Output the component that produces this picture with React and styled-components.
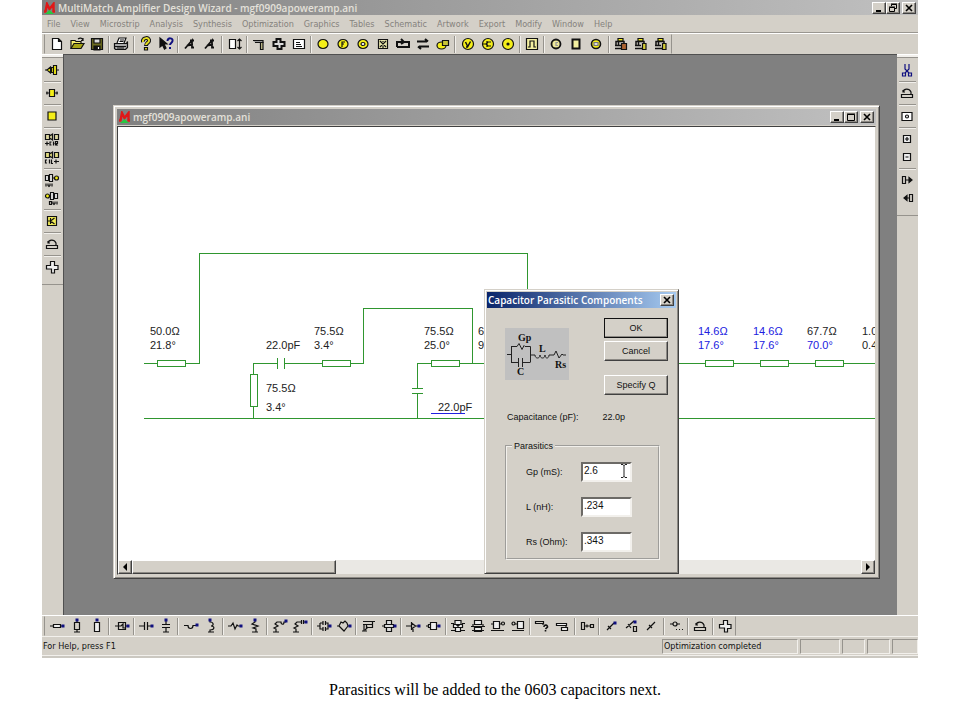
import { useState } from 'react';
import styled, { createGlobalStyle, css } from 'styled-components';

const face = '#d4d0c8';
const green = '#2f962f';
const blue = '#2020e0';
const navy = '#101080';
const yellow = '#f4ee18';

const uiFont = '"DejaVu Sans Condensed", "DejaVu Sans", sans-serif';
const titleFont = '"Open Sans", "Noto Sans", sans-serif';
const dialogFont = '"Liberation Sans", Arial, sans-serif';

const GlobalStyle = createGlobalStyle`
    * {
        box-sizing: border-box;
    }
    body {
        margin: 0;
        background: #fff;
    }
    button {
        padding: 0;
        border: 0;
        background: none;
        color: inherit;
        font: inherit;
    }
`;

const raised = css`
    border: 1px solid;
    border-color: #fff #404040 #404040 #fff;
    box-shadow: inset -1px -1px 0 #8c8984;
    background: ${face};
`;

const Page = styled.div`
    display: flex;
    flex-direction: column;
    min-height: 100vh;
    padding: 0 42px;
`;

const Frame = styled.main`
    display: flex;
    flex: 1;
    flex-direction: column;
    background: ${face};
    color: #111;
    font: 9px/12px ${uiFont};
`;

const Caption = styled.p`
    margin: 0;
    padding: 23px 0 21px 30px;
    color: #000;
    font: 16px/18px 'Liberation Serif', 'Times New Roman', serif;
    text-align: center;
`;

const TitleBar = styled.header`
    display: flex;
    align-items: center;
    gap: 2px;
    height: ${(p) => (p.$inner ? 16 : 15)}px;
    padding: 0 2px 0 1px;
    background: linear-gradient(90deg, #808080, #c0c0c0);
    color: #e4e1da;
`;

const Title = styled.h1`
    flex: 1;
    margin: 0;
    overflow: hidden;
    font: 600 10px/14px ${titleFont};
    white-space: nowrap;
`;

const WindowButtons = styled.div`
    display: flex;
    & > :last-child {
        margin-left: 2px;
    }
`;

const CaptionButton = styled.button`
    ${raised}
    display: grid;
    place-items: center;
    width: 14px;
    height: 12px;
    color: #000;
`;

const MenuBar = styled.nav`
    display: flex;
    height: 18px;
    align-items: center;
    border-bottom: 1px solid #999690;
    color: #85827d;
`;

const MenuItem = styled.button`
    padding: 0 5px;
`;

const ToolBar = styled.div`
    display: flex;
    flex-shrink: 0;
    height: 21px;
    padding-left: 2px;
    border-top: 1px solid #fff;
`;

const Tools = styled.div`
    display: flex;
    flex: 0 1 ${(p) => p.$length}px;
    align-items: center;
    justify-content: space-between;
    border: 1px solid;
    border-color: transparent #96938d transparent #96938d;
    padding-left: 2px;
`;

const Group = styled.div`
    display: flex;
    flex-direction: ${(p) => (p.$vertical ? 'column' : 'row')};
`;

const Separator = styled.span`
    ${(p) =>
        p.$vertical
            ? 'height: 2px; margin: 2px 2px 1px; border-top: 1px solid #96938d; border-bottom: 1px solid #f2f0ec;'
            : 'width: 2px; height: 17px; border-left: 1px solid #96938d; border-right: 1px solid #f2f0ec;'}
`;

const Tool = styled.button`
    display: grid;
    place-items: center;
    width: 20px;
    height: 18px;
`;

const Glyph = styled.svg`
    display: block;
    width: 16px;
    height: 16px;
    fill: none;
    stroke: #111;
    stroke-width: 1.2;
    overflow: visible;
`;

const Middle = styled.div`
    display: flex;
    flex: 1;
`;

const SideBar = styled.div`
    width: 21px;
    border-top: 1px solid #fff;
`;

const SideTools = styled.div`
    display: flex;
    flex-direction: column;
    padding: 4px 0 8px;
    border-top: 2px solid #f2f0ec;
    border-bottom: 1px solid #96938d;
    box-shadow: inset 0 1px 0 #96938d;
`;

const Desktop = styled.div`
    position: relative;
    flex: 1;
    overflow: hidden;
    border: solid #505050;
    border-width: 1px 0 0 1px;
    background: #808080;
`;

const DocumentWindow = styled.section`
    position: absolute;
    inset: 50px 17px 36px 49px;
    display: flex;
    flex-direction: column;
    padding: 3px;
    border: 1px solid;
    border-color: ${face} #404040 #404040 ${face};
    background: ${face};
    box-shadow: inset 1px 1px 0 #fff, inset -1px -1px 0 #8c8984;
`;

const DocumentView = styled.div`
    display: flex;
    flex: 1;
    flex-direction: column;
    min-height: 0;
    margin-top: 1px;
    border: 1px solid;
    border-color: #404040 ${face} ${face} #404040;
    background: #fff;
`;

const Schematic = styled.svg`
    flex: 1;
    width: 100%;
    min-height: 0;
    fill: none;
    stroke: ${green};
    shape-rendering: crispEdges;
    text {
        stroke: none;
        font: 11px ${dialogFont};
    }
`;

const ScrollBar = styled.div`
    display: flex;
    height: 14px;
    background: #eae8e4;
`;

const ScrollButton = styled.button`
    ${raised}
    display: grid;
    place-items: center;
    width: 14px;
`;

const Thumb = styled.div`
    ${raised}
    width: 27%;
    margin-right: auto;
`;

const Dialog = styled.section`
    position: absolute;
    left: 420px;
    top: 234px;
    width: 195px;
    padding: 2px;
    border: 1px solid;
    border-color: ${face} #404040 #404040 ${face};
    background: ${face};
    box-shadow: inset 1px 1px 0 #fff, inset -1px -1px 0 #8c8984;
    color: #111;
    font: 9px/12px ${dialogFont};
`;

const DialogTitle = styled.header`
    display: flex;
    align-items: center;
    height: 16px;
    padding: 0 2px 0 1px;
    background: linear-gradient(90deg, #0a246a, #a6caf0);
    color: #fff;
`;

const DialogHeading = styled.h2`
    flex: 1;
    margin: 0;
    font: 600 10px/14px ${titleFont};
    white-space: nowrap;
`;

const DialogTop = styled.div`
    display: flex;
    align-items: flex-start;
    justify-content: space-between;
    padding: 10px 8px 0 18px;
`;

const Diagram = styled.svg`
    width: 64px;
    height: 52px;
    margin-top: 10px;
    background: #c0c0c0;
    fill: none;
    stroke: #222;
    text {
        fill: #111;
        stroke: none;
        font: bold 10px 'Liberation Serif', serif;
    }
`;

const DialogButtons = styled.div`
    display: flex;
    flex-direction: column;
    gap: 3px;
    & > :last-child {
        margin-top: 11px;
    }
`;

const PushButton = styled.button`
    ${raised}
    width: 64px;
    height: 20px;
    ${(p) => p.$primary && 'outline: 1px solid #111; border-color: #fff #8c8984 #8c8984 #fff; outline-offset: -1px;'}
`;

const Capacitance = styled.p`
    display: flex;
    gap: 24px;
    margin: 16px 0 0 20px;
`;

const Parasitics = styled.fieldset`
    margin: 17px 16px 11px 18px;
    padding: 10px 26px 6px 19px;
    border: 2px groove #f2f0ec;
`;

const Legend = styled.legend`
    margin-left: -14px;
    padding: 0 2px;
`;

const Field = styled.div`
    display: flex;
    align-items: center;
    justify-content: space-between;
    & + & {
        margin-top: 15px;
    }
`;

const TextBox = styled.input`
    width: 51px;
    height: 20px;
    padding: 0 1px 3px;
    border: 2px solid;
    border-color: #6c6a66 #f2f0ec #f2f0ec #6c6a66;
    border-radius: 0;
    outline: 0;
    background: #fff;
    color: #111;
    font: 10px/12px ${dialogFont};
`;

const TextCursor = styled.svg`
    position: absolute;
    left: 135px;
    top: 174px;
    width: 8px;
    height: 14px;
    fill: none;
    stroke: #222;
`;

const StatusBar = styled.footer`
    display: flex;
    align-items: center;
    gap: 2px;
    height: 19px;
    border-top: 1px solid #f2f0ec;
`;

const StatusText = styled.span`
    flex: 1;
    padding-left: 1px;
`;

const StatusCell = styled.span`
    width: ${(p) => p.$w}px;
    height: 15px;
    padding-left: 1px;
    border: 1px solid;
    border-color: #96938d #f2f0ec #f2f0ec #96938d;
    white-space: nowrap;
`;

const FrameEdge = styled.div`
    height: 3px;
    border-top: 1px solid #f2f0ec;
    background: #cbc8c1;
`;

const dot = (x, y) => <rect x={x} y={y} width="2" height="2" fill={navy} stroke={navy} strokeWidth="1" />;

const glyphs = {
    page: <path d="M3.5 2.5h6l3 3v8h-9zM9.5 2.5v3h3" fill="#fff" />,
    open: (
        <>
            <path d="M2 12.5v-8h4l1 1h5v2" fill="#f5ef70" />
            <path d="M2 12.5l3-5h10l-3 5z" fill="#a6a418" />
            <path d="M9 3c2-1.5 4-1 5 1M14 2v2.5h-2" />
        </>
    ),
    save: (
        <>
            <path d="M2.5 2.5h11v11h-11z" fill="#6d6c20" />
            <path d="M5 3h6v4H5z" fill="#ddd" />
            <path d="M5 10h6v4H5z" fill="#111" />
            <path d="M9.5 11v2" stroke="#fff" />
        </>
    ),
    print: (
        <>
            <path d="M4 7l2-5h7l-2 5" fill="#fff" />
            <path d="M7 4h4M6.5 5.5h4" />
            <path d="M1.5 7.5h12l1-2v6l-2 2h-10l-1-1z" fill="#aaa" />
            <path d="M2 10.5h11M4 12h7" />
        </>
    ),
    help: (
        <>
            <path d="M5 6c-1-5 7-5 6-1-.5 2-3 2-3 5" strokeWidth="4" />
            <path d="M6.5 11.5h3v2.5h-3z" fill="#e4dc20" />
            <path d="M5 6c-1-5 7-5 6-1-.5 2-3 2-3 4" stroke="#e4dc20" strokeWidth="2" />
        </>
    ),
    what: (
        <>
            <path d="M2 2v9l2.5-2 2 4 1.5-1-2-4h3z" fill="#111" />
            <path d="M9.5 5c0-4 6-3 5 0-.5 2-2.5 2-2.5 4M12 11v2" stroke={navy} strokeWidth="2" />
        </>
    ),
    letterA: <path d="M3 12.5l7-8v7h2M5 9.5l6-1M8 4.5h4" strokeWidth="1.8" />,
    sizeBox: (
        <>
            <path d="M2.5 3.5h6v9h-6z" fill="#fff" />
            <path d="M12.5 3v10M10.5 5l2-2 2 2M10.5 11l2 2 2-2" />
        </>
    ),
    tee: (
        <>
            <path d="M2 4.5h10v2H4" fill="#999" />
            <path d="M9.5 6.5h2.5v7H9.5z" fill="#c9c490" />
        </>
    ),
    plus: <path d="M5.5 3h4v3h4v4h-3v3h-4v-3h-4V6h3z" fill="#ddd" strokeWidth="2" />,
    note: <path d="M2.5 3.5h11v9h-11zM5 6.5h4M5 8.5h5M5 10.5h6" fill="#fff" />,
    ellipse: <ellipse cx="8" cy="8" rx="5" ry="4.5" fill={yellow} />,
    ellipseF: (
        <>
            <ellipse cx="8" cy="8" rx="5" ry="4.5" fill={yellow} />
            <path d="M7 11V6h3M7 8h2" />
        </>
    ),
    ring: (
        <>
            <ellipse cx="8" cy="8" rx="5" ry="4.5" fill={yellow} />
            <ellipse cx="8" cy="8" rx="2" ry="1.5" fill="#fff" />
        </>
    ),
    grid: <path d="M3.5 3.5h9v9h-9zM5 5l6 6M11 5l-6 6M8 5v1M8 10v2" fill="#e7e5aa" />,
    loop: <path d="M2 11V6h12v5H2M6 3l3 3-3 2" strokeWidth="2" />,
    swap: <path d="M2 5.5h10M4 10.5h10M10 3l3 2.5M6 13l-3-2.5" strokeWidth="2" />,
    stack: (
        <>
            <ellipse cx="6.5" cy="9.5" rx="4.5" ry="3.5" fill={yellow} />
            <path d="M7.5 4.5h6v5h-6z" fill="#c8c438" />
        </>
    ),
    roundY: (
        <>
            <circle cx="8" cy="8" r="5.5" fill={yellow} />
            <path d="M5.5 6l2 4M10.5 5.5L7.5 11H6" strokeWidth="1.5" />
        </>
    ),
    roundC: (
        <>
            <circle cx="8" cy="8" r="5.5" fill={yellow} />
            <path d="M3 8h3l2-2h3M6 8l2 2h3M7 5v6" />
        </>
    ),
    roundDot: (
        <>
            <circle cx="8" cy="8" r="5.5" fill={yellow} />
            <circle cx="8" cy="8" r="1" fill="#111" />
        </>
    ),
    pulse: (
        <>
            <path d="M2.5 2.5h11v11h-11z" fill="#f3efa0" />
            <path d="M4 11h2V5h4v6h2" />
        </>
    ),
    boldRound: (
        <>
            <circle cx="8" cy="8" r="4.5" fill="#eee89a" strokeWidth="1.8" />
            <path d="M10 6.5H8v3h2" stroke="#999" />
        </>
    ),
    boldSquare: <path d="M4.5 3.5h7v9h-7z" fill="#f2efa0" strokeWidth="2" />,
    boldRing: (
        <>
            <circle cx="8" cy="8" r="4.5" fill={yellow} strokeWidth="1.6" />
            <path d="M6 6.5h4v3H6z" fill="#ddd" stroke="#777" />
        </>
    ),
    lockA: (
        <>
            <path d="M5 2.5h5V5H5z" fill={yellow} />
            <path d="M3 9V5.5h8V8M2 9.5h6M2 12.5h6M5.5 6v4" strokeWidth="1.5" />
            <path d="M8.5 7.5h5v6h-5z" fill="#ac6330" />
        </>
    ),
    lockB: (
        <>
            <path d="M5 2.5h5V5H5z" fill={yellow} />
            <path d="M3 9V5.5h8V8M2 9.5h6M2 12.5h7M5.5 6v4" strokeWidth="1.5" />
            <path d="M9.5 7.5h3.5v6H9.5z" fill="#d4cc38" />
        </>
    ),
    ampLeft: (
        <>
            <path d="M1 8h2M13 8h2" />
            <path d="M3 8l3.5-3v6zM7.5 5.5h2v5h-2zM9.5 3.5h3v9h-3z" fill={yellow} />
        </>
    ),
    block: (
        <>
            <path d="M5.5 4.5h5v7h-5z" fill={yellow} />
            <path d="M2 8h3M11 8h3M3 6.5v3M13 6.5v3" />
        </>
    ),
    square: <path d="M4 4h8v8H4z" fill={yellow} />,
    cir: (
        <>
            <path d="M1.5 3.5h4v5h-4zM5.5 5l3-2v6l-3-2zM10.5 3.5h4v5h-4z" fill="#ddd8a0" />
            <path d="M1 12.5h4M3 10.5v4M7.5 11H6v3h1.5M9.5 10.5v4M11.5 14.5v-4h2v2h-2l2 2" />
        </>
    ),
    cil: (
        <>
            <path d="M1.5 3.5h4v5h-4zM5.5 5l3-2v6l-3-2zM10.5 3.5h4v5h-4z" fill="#e2dc80" />
            <path d="M3 11H1.5v3H3M5.5 10.5v4M7.5 10.5v4H9M10 12.5h5M12 10.5v4" />
        </>
    ),
    ivi: (
        <>
            <path d="M1.5 3.5h3v5h-3zM5.5 2.5h3v7h-3zM8.5 6h2" fill="#eee" />
            <circle cx="12.5" cy="6" r="2" fill={yellow} />
            <path d="M2 11.5v3M4 11.5v2l1 1 1-1v-2M8 11.5v3" />
        </>
    ),
    ovi: (
        <>
            <circle cx="3.5" cy="6" r="2" fill={yellow} />
            <path d="M6.5 2.5h3v7h-3zM10.5 3.5h3v5h-3z" fill="#eee" />
            <path d="M5.5 11.5h2v3h-2zM9 11.5v2l1 1 1-1v-2M13 11.5v3" />
        </>
    ),
    transistor: (
        <>
            <path d="M3.5 3.5h9v9h-9z" fill="#f3ed58" />
            <path d="M3.5 8h3M6.5 5v6M6.5 8l4-3M6.5 8l4 3" />
        </>
    ),
    hat: <path d="M2.5 9.5h11v3h-11zM4 7c1-3.5 6-4 8 0v2M4 5v2h2" />,
    cross: <path d="M6.5 2.5h4v4h3.5v4h-3.5v3.5h-3v-4h-5V6.5h4z" fill="#eee" />,
    cut: <path d="M6 2v5l4 4M10 2v5l-4 4M3.5 11h3v3h-3zM9.5 11h3v3h-3z" stroke={navy} />,
    target: (
        <>
            <path d="M3 4.5h10v8H3z" fill="#fff" />
            <circle cx="8" cy="8.5" r="1.5" />
        </>
    ),
    zoomIn: <path d="M4.5 4.5h7v7h-7zM6 8h4M8 6v4" fill="#eee" />,
    zoomOut: <path d="M4.5 4.5h7v7h-7zM6.5 8h3" fill="#eee" />,
    portOut: (
        <>
            <path d="M3.5 4.5h3v7h-3zM7 8h4" />
            <path d="M10 5.5l3 2.5-3 2.5z" fill="#111" />
        </>
    ),
    portIn: (
        <>
            <path d="M10.5 4.5h3v7h-3zM10 8H6" />
            <path d="M8 5.5L5 8l3 2.5z" fill="#111" />
        </>
    ),
    lineH: <><path d="M1 8h3M12 8h2M4.5 6.5h7v3h-7z" fill="#eee" />{dot(13, 7)}</>,
    lineV: <><path d="M8 2v2M8 12v2M5.5 4.5h5v7h-5zM5 14h6" />{dot(7, 1)}</>,
    stub: <><path d="M5.5 4.5h5v9h-5z" fill="#eee" />{dot(7, 1)}</>,
    boxed: <><path d="M1 8h3M12 8h2M4.5 4.5h7v7h-7zM5 8h2l2-2v4h2" />{dot(13, 7)}</>,
    capH: <><path d="M1 8h5M6.5 4v8M9.5 4v8M10 8h4" />{dot(13, 7)}</>,
    capV: <><path d="M8 2v4M4 6.5h8M4 9.5h8M8 10v4M5 14h6" />{dot(7, 1)}</>,
    coilH: <><path d="M1 7.5h4c0 4 5 4 5 0h3" />{dot(13, 6)}</>,
    coilV: <><path d="M7 2v2c4 0 4 4 1 4 4 0 4 4-1 4v2M5 14h6" />{dot(6, 1)}</>,
    resH: <><path d="M1 8h3l2-3 2 6 2-4 1 1h3" />{dot(13, 7)}</>,
    resV: <><path d="M8 2v2l-3 2 6 2-5 2 3 1v3M5 14h6" />{dot(7, 1)}</>,
    chainA: <><path d="M4 14v-3l-2-1 4-2-3-2 2-2h4c0 3 3 3 3 0h2M1 14h6" />{dot(13, 2)}</>,
    chainB: <><path d="M4 14v-3l-2-1 4-2-3-2 2-2h4M9.5 2v4M11.5 2v4M12 4h2M1 14h6" />{dot(13, 3)}</>,
    tankA: <><path d="M1 8h3M4 5v6h3M4 5h3M7 3v4M9.5 3v4M9 5h3v6H9M7 9v4M9.5 9v4M12 8h2" />{dot(13, 7)}</>,
    tankB: <><path d="M1 8h2l2-4 2 1 2-2 2 2 1 3-4 5-5-5M12 8h2" />{dot(13, 7)}</>,
    coupA: <path d="M2 3.5h12M2 6.5h3M5.5 6.5h6v3h-6zM11.5 9.5V4M3 7v6M1 13h5M4 12l3-3" />,
    coupB: <><path d="M1 8h3M12 8h2M5.5 2.5h5v4h-5zM5.5 9.5h5v4h-5zM3.5 6.5h9v3h-9z" fill="#ddd" />{dot(13, 7)}</>,
    fet: <><path d="M1 8h5M6.5 4v8M6.5 5l4 3M6.5 11l4-3h3M8 11v3" />{dot(13, 7)}</>,
    twoPort: <><path d="M1 8h3M12 8h2M5.5 4.5h6v7h-6zM3.5 6.5h2v3h-2z" fill="#eee" />{dot(13, 7)}</>,
    netA: <path d="M1 5.5h3M12 5.5h3M1 12.5h4M11 12.5h4M5 2.5h6v4H5zM3.5 6.5h9v3h-9zM5.5 9.5h5v4h-5zM6 6.5l4 3M10 6.5l-4 3" fill="#eee" />,
    netB: <path d="M1 8.5h14M2 12.5h12M4.5 2.5h7v4h-7zM4.5 9.5h7v4h-7zM3 6v3M13 6v3" fill="#eee" />,
    netC: <><path d="M3.5 3.5h6v7h-6zM10 6h1M1 12.5h13M1 6h2" fill="#eee" /><circle cx="13" cy="5.5" r="1.5" /></>,
    netD: <><path d="M7.5 3.5h6v7h-6zM5 6h2M2 12.5h12" fill="#eee" /><circle cx="3.5" cy="5.5" r="1.5" /></>,
    askTee: (
        <>
            <path d="M1.5 3.5h8v2h-8zM9 5v2" />
            <path d="M10 9c0-3 4-2 3.5 0l-2 2M11.5 12v1.5" strokeWidth="1.6" />
        </>
    ),
    steps: <path d="M2.5 5.5h10v2h-10zM7.5 9.5h6v3h-6zM12 7v2" fill="#eee" />,
    between: <path d="M2.5 4.5h3v7h-3zM6 8h5M8 6.5v3M11.5 6.5h3v3h-3z" />,
    needleA: <><path d="M4 12l7-7M5 8l3 3" />{dot(11, 4)}</>,
    needleB: <><path d="M3 10l8-7M5 6l3 4M10.5 8.5h3v5h-3z" />{dot(11, 3)}</>,
    needleC: <path d="M4 12l8-8M6 7l3 3" />,
    more: <><circle cx="7" cy="6" r="2" /><path d="M2 6h3M9 6h3M8 11.5h1M11 11.5h1M14 11.5h1" /></>,
};

const topTools = [
    ['page', 'open', 'save'],
    ['print'],
    ['help', 'what'],
    ['letterA', 'letterA'],
    ['sizeBox'],
    ['tee', 'plus', 'note'],
    ['ellipse', 'ellipseF', 'ring', 'grid', 'loop', 'swap', 'stack'],
    ['roundY', 'roundC', 'roundDot'],
    ['pulse'],
    ['boldRound', 'boldSquare', 'boldRing'],
    ['lockA', 'lockB', 'lockB'],
];

const bottomTools = [
    ['lineH', 'lineV', 'stub'],
    ['boxed'],
    ['capH', 'capV'],
    ['coilH', 'coilV'],
    ['resH', 'resV'],
    ['chainA', 'chainB'],
    ['tankA', 'tankB'],
    ['coupA', 'coupB'],
    ['fet', 'twoPort'],
    ['netA', 'netB', 'netC', 'netD'],
    ['askTee', 'steps'],
    ['between'],
    ['needleA', 'needleB', 'needleC'],
    ['more'],
    ['hat'],
    ['cross'],
];

const leftTools = [['ampLeft'], ['block'], ['square'], ['cir', 'cil'], ['ivi', 'ovi'], ['transistor'], ['hat'], ['cross']];
const rightTools = [['cut'], ['hat'], ['target'], ['zoomIn', 'zoomOut'], ['portOut', 'portIn']];

const menus = [
    'File', 'View', 'Microstrip', 'Analysis', 'Synthesis', 'Optimization', 'Graphics',
    'Tables', 'Schematic', 'Artwork', 'Export', 'Modify', 'Window', 'Help',
];

const ToolGroups = ({ groups, vertical }) =>
    groups.map((names, gi) => [
        gi > 0 && <Separator key={`s${gi}`} $vertical={vertical} />,
        <Group key={gi} $vertical={vertical}>
            {names.map((name, ni) => (
                <Tool key={ni} type="button" aria-label={name}>
                    <Glyph viewBox="0 0 16 16">{glyphs[name]}</Glyph>
                </Tool>
            ))}
        </Group>,
    ]);

const Logo = () => (
    <svg width="13" height="12" viewBox="0 0 13 12">
        <path d="M1 9.5h1.5L4 2l2.5 5L10.5 2v7.5H12" fill="none" stroke="#e01818" strokeWidth="2.4" />
        <path d="M2 12l4.5-4 4.5 4z" fill="#28c840" />
    </svg>
);

const captionGlyphs = {
    Minimize: <path d="M2 8h5" strokeWidth="2" />,
    Maximize: <path d="M1.5 2.5h7v6h-7zM1 2h8" />,
    Restore: <path d="M3.5 3V1.5h5v4H7M1.5 4.5h5v4h-5zM1 4h6M3 1h6" />,
    Close: <path d="M2 2l6 6M8 2L2 8" strokeWidth="1.6" />,
};

const CaptionControl = ({ name }) => (
    <CaptionButton type="button" aria-label={name}>
        <svg width="10" height="10" viewBox="0 0 10 10" fill="none" stroke="#000">
            {captionGlyphs[name]}
        </svg>
    </CaptionButton>
);

// x, y of the baseline, text, colour
const labels = [
    [32, 208, '50.0Ω'],
    [32, 222, '21.8°'],
    [148, 222, '22.0pF'],
    [196, 208, '75.5Ω'],
    [196, 222, '3.4°'],
    [148, 265, '75.5Ω'],
    [148, 284, '3.4°'],
    [306, 208, '75.5Ω'],
    [306, 222, '25.0°'],
    [320, 284, '22.0pF'],
    [360, 208, '6'],
    [360, 222, '9'],
    [580, 208, '14.6Ω', blue],
    [580, 222, '17.6°', blue],
    [635, 208, '14.6Ω', blue],
    [635, 222, '17.6°', blue],
    [689, 208, '67.7Ω'],
    [689, 222, '70.0°', blue],
    [744, 208, '1.0'],
    [744, 222, '0.4'],
];

const lines = [39, 204, 313, 587, 642, 697];

const Circuit = () => (
    <Schematic>
        <path d="M26 291.5H757M26 236.5H81.5V126.5H409.5V236.5" />
        <path d="M135.5 291V236.5H159.5M166.5 236.5H245.5V181.5H354.5V236.5" />
        <path d="M159.5 231v11M166.5 231v11M299.5 291V266.5M299.5 261.5V236.5H757M294 261.5h11M294 266.5h11" />
        <rect x="132.5" y="247.5" width="7" height="32" fill="#fff" />
        {lines.map((x) => (
            <rect key={x} x={x + 0.5} y="233.5" width="28" height="6" fill="#fff" />
        ))}
        <path d="M313 286.5h34" stroke={blue} />
        {labels.map(([x, y, text, fill = '#222']) => (
            <text key={`${x}.${y}`} x={x} y={y} fill={fill}>
                {text}
            </text>
        ))}
    </Schematic>
);

const ParasiticsDialog = () => {
    const [values, setValues] = useState({ gp: '2.6', l: '.234', rs: '.343' });
    const fields = [
        ['gp', 'Gp (mS):'],
        ['l', 'L (nH):'],
        ['rs', 'Rs (Ohm):'],
    ];

    return (
        <Dialog role="dialog" aria-labelledby="dialog-title">
            <DialogTitle>
                <DialogHeading id="dialog-title">Capacitor Parasitic Components</DialogHeading>
                <CaptionControl name="Close" />
            </DialogTitle>
            <DialogTop>
                <Diagram viewBox="0 0 64 52">
                    <path d="M2 26.5h4M6.5 18v16M6 18.5h6l2-3 3 6 2-4 1 1h5.5v16M6 34.5h7.5M13.5 30v9M17.5 30v9M18 34.5h7" />
                    <path d="M25 27h5c0 4 5 4 5 0 0 4 5 4 5 0 0 4 4 4 4 0h5l2-4 3 7 3-4 1 1h3" />
                    <text x="13" y="13">Gp</text>
                    <text x="34" y="24">L</text>
                    <text x="12" y="47">C</text>
                    <text x="50" y="40">Rs</text>
                </Diagram>
                <DialogButtons>
                    <PushButton type="button" $primary>OK</PushButton>
                    <PushButton type="button">Cancel</PushButton>
                    <PushButton type="button">Specify Q</PushButton>
                </DialogButtons>
            </DialogTop>
            <Capacitance>
                <span>Capacitance (pF):</span>
                <span>22.0p</span>
            </Capacitance>
            <Parasitics>
                <Legend>Parasitics</Legend>
                {fields.map(([id, label]) => (
                    <Field key={id}>
                        <label htmlFor={id}>{label}</label>
                        <TextBox
                            id={id}
                            value={values[id]}
                            onChange={(e) => setValues({ ...values, [id]: e.target.value })}
                        />
                    </Field>
                ))}
            </Parasitics>
            <TextCursor viewBox="0 0 8 14">
                <path d="M1 .5h2l1 1 1-1h2M4 1v12M1 13.5h2l1-1 1 1h2" />
            </TextCursor>
        </Dialog>
    );
};

const App = () => (
    <Page>
        <GlobalStyle />
        <Frame>
            <TitleBar>
                <Logo />
                <Title>MultiMatch Amplifier Design Wizard - mgf0909apoweramp.ani</Title>
                <WindowButtons>
                    <CaptionControl name="Minimize" />
                    <CaptionControl name="Restore" />
                    <CaptionControl name="Close" />
                </WindowButtons>
            </TitleBar>
            <MenuBar>
                {menus.map((m) => (
                    <MenuItem key={m} type="button">{m}</MenuItem>
                ))}
            </MenuBar>
            <ToolBar>
                <Tools $length={628}>
                    <ToolGroups groups={topTools} />
                </Tools>
            </ToolBar>
            <Middle>
                <SideBar>
                    <SideTools>
                        <ToolGroups groups={leftTools} vertical />
                    </SideTools>
                </SideBar>
                <Desktop>
                    <DocumentWindow>
                        <TitleBar $inner>
                            <Logo />
                            <Title as="h2">mgf0909apoweramp.ani</Title>
                            <WindowButtons>
                                <CaptionControl name="Minimize" />
                                <CaptionControl name="Maximize" />
                                <CaptionControl name="Close" />
                            </WindowButtons>
                        </TitleBar>
                        <DocumentView>
                            <Circuit />
                            <ScrollBar>
                                <ScrollButton type="button" aria-label="Scroll left">
                                    <svg width="8" height="8"><path d="M6 0v8L2 4z" /></svg>
                                </ScrollButton>
                                <Thumb />
                                <ScrollButton type="button" aria-label="Scroll right">
                                    <svg width="8" height="8"><path d="M2 0v8l4-4z" /></svg>
                                </ScrollButton>
                            </ScrollBar>
                        </DocumentView>
                    </DocumentWindow>
                    <ParasiticsDialog />
                </Desktop>
                <SideBar>
                    <SideTools>
                        <ToolGroups groups={rightTools} vertical />
                    </SideTools>
                </SideBar>
            </Middle>
            <ToolBar>
                <Tools $length={692}>
                    <ToolGroups groups={bottomTools} />
                </Tools>
            </ToolBar>
            <StatusBar>
                <StatusText>For Help, press F1</StatusText>
                <StatusCell $w={136}>Optimization completed</StatusCell>
                <StatusCell $w={40} />
                <StatusCell $w={23} />
                <StatusCell $w={23} />
                <StatusCell $w={26} />
            </StatusBar>
            <FrameEdge />
        </Frame>
        <Caption>Parasitics will be added to the 0603 capacitors next.</Caption>
    </Page>
);

export default App;
